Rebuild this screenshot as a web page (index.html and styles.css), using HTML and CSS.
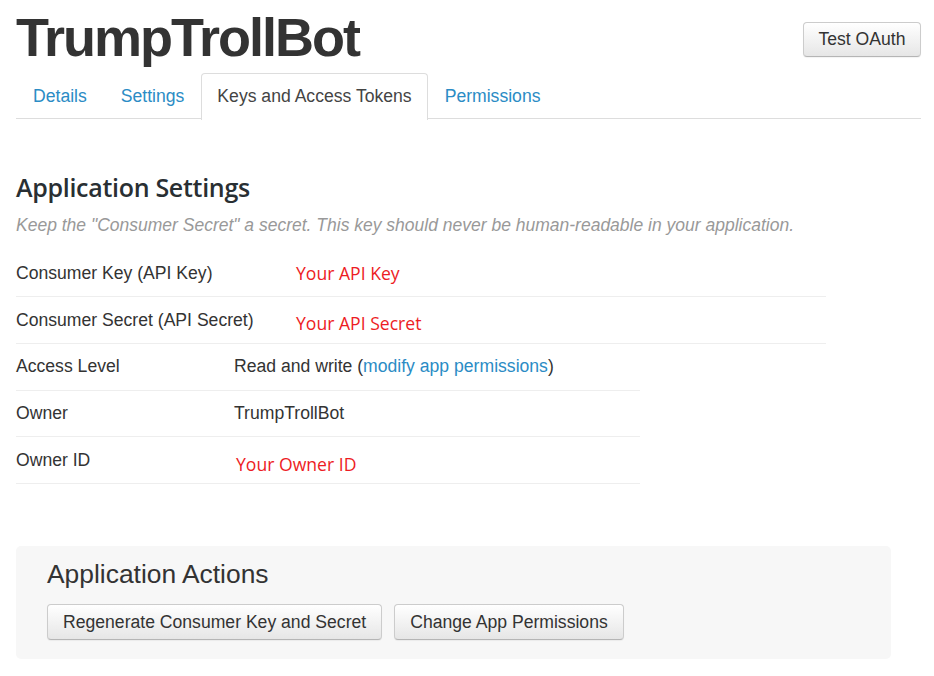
FILE: index.html
```html
<!DOCTYPE html>
<html>
<head>
<meta charset="utf-8">
<link rel="stylesheet" href="styles.css">
</head>
<body>
<div class="page">
  <header class="header">
    <h1 class="app-title">TrumpTrollBot</h1>
    <button class="btn btn-test">Test OAuth</button>
  </header>
  <nav class="tabs">
    <a class="tab">Details</a>
    <a class="tab">Settings</a>
    <a class="tab active">Keys and Access Tokens</a>
    <a class="tab">Permissions</a>
  </nav>

  <section class="settings">
    <h2 class="section-title">Application Settings</h2>
    <p class="hint">Keep the "Consumer Secret" a secret. This key should never be human-readable in your application.</p>
    <div class="rows rows-wide">
      <div class="row"><span class="label">Consumer Key (API Key)</span><span class="value red red-wide">Your API Key</span></div>
      <div class="row"><span class="label">Consumer Secret (API Secret)</span><span class="value red red-wide low">Your API Secret</span></div>
    </div>
    <div class="rows rows-narrow">
      <div class="row"><span class="label">Access Level</span><span class="value">Read and write (<a class="link">modify app permissions</a>)</span></div>
      <div class="row"><span class="label">Owner</span><span class="value">TrumpTrollBot</span></div>
      <div class="row"><span class="label">Owner ID</span><span class="value red low owner-id">Your Owner ID</span></div>
    </div>
  </section>

  <section class="actions">
    <h3 class="actions-title">Application Actions</h3>
    <div class="actions-buttons">
      <button class="btn">Regenerate Consumer Key and Secret</button>
      <button class="btn">Change App Permissions</button>
    </div>
  </section>
</div>
</body>
</html>
```
FILE: styles.css
```css
* { box-sizing: border-box; }
body {
  margin: 0;
  background: #fff;
  color: #333;
  font-family: "Liberation Sans", Arial, sans-serif;
  font-size: 17.6px;
}
.page {
  width: 921px;
  padding: 7px 0 0 16px;
}
.header {
  display: flex;
  justify-content: space-between;
  align-items: flex-start;
  height: 66px;
}
.app-title {
  margin: 0;
  font-family: "Liberation Sans", Arial, sans-serif;
  font-weight: 700;
  font-size: 54px;
  line-height: 60px;
  letter-spacing: -2px;
  color: #333;
}
.btn {
  font-family: "Liberation Sans", Arial, sans-serif;
  font-size: 17.6px;
  color: #333;
  height: 36px;
  padding: 0 15px;
  border: 1px solid #ccc;
  border-bottom-color: #b5b5b5;
  border-radius: 4px;
  background: linear-gradient(#ffffff, #e6e6e6);
  box-shadow: 0 1px 1px rgba(0,0,0,0.05);
}
.btn-test {
  margin-top: 15px;
  height: 35px;
  width: 118px;
  padding: 0;
}
.tabs {
  display: flex;
  height: 46px;
  border-bottom: 1px solid #ddd;
}
.tab {
  display: flex;
  align-items: center;
  padding: 0 16px 1px;
  border: 1px solid transparent;
  border-bottom: none;
  border-radius: 4px 4px 0 0;
  color: #2b8cc5;
  height: 46px;
  white-space: nowrap;
}
.tab.active {
  color: #444;
  border-color: #ddd;
  background: #fff;
  height: 47px;
  margin-bottom: -1px;
  padding: 0 15px 1px;
}
.settings {
  padding-top: 51px;
}
.section-title {
  margin: 0;
  font-family: "Open Sans", sans-serif;
  font-weight: 600;
  font-size: 25px;
  line-height: 34px;
  letter-spacing: -0.3px;
  color: #292f33;
}
.hint {
  margin: 9px 0 0;
  font-style: italic;
  color: #999;
  font-size: 17.5px;
  line-height: 24px;
  height: 24px;
  white-space: nowrap;
}
.rows-wide {
  width: 810px;
  margin-top: 13px;
}
.rows-narrow {
  width: 624px;
}
.row {
  display: flex;
  align-items: center;
  height: 47px;
  border-bottom: 1px solid #eee;
}
.rows-narrow .row {
  height: 46.7px;
}
.label {
  width: 218px;
  flex: none;
  white-space: nowrap;
}
.value {
  display: flex;
  align-items: center;
  white-space: nowrap;
}
.red {
  font-family: "Open Sans", sans-serif;
  color: #ed1c24;
  font-size: 17.6px;
}
.red-wide {
  margin-left: 62px;
}
.low {
  position: relative;
  top: 3px;
}
.owner-id {
  margin-left: 2px;
  top: 4px;
}
.link {
  color: #2b8cc5;
}
.actions {
  margin-top: 62px;
  width: 875px;
  background: #f7f7f7;
  border-radius: 5px;
  padding: 12px 0 19px 31px;
}
.actions-title {
  margin: 0;
  font-weight: 400;
  font-size: 26.4px;
  line-height: 32px;
  color: #333;
}
.actions-buttons {
  display: flex;
  gap: 12px;
  margin-top: 14px;
}
```
